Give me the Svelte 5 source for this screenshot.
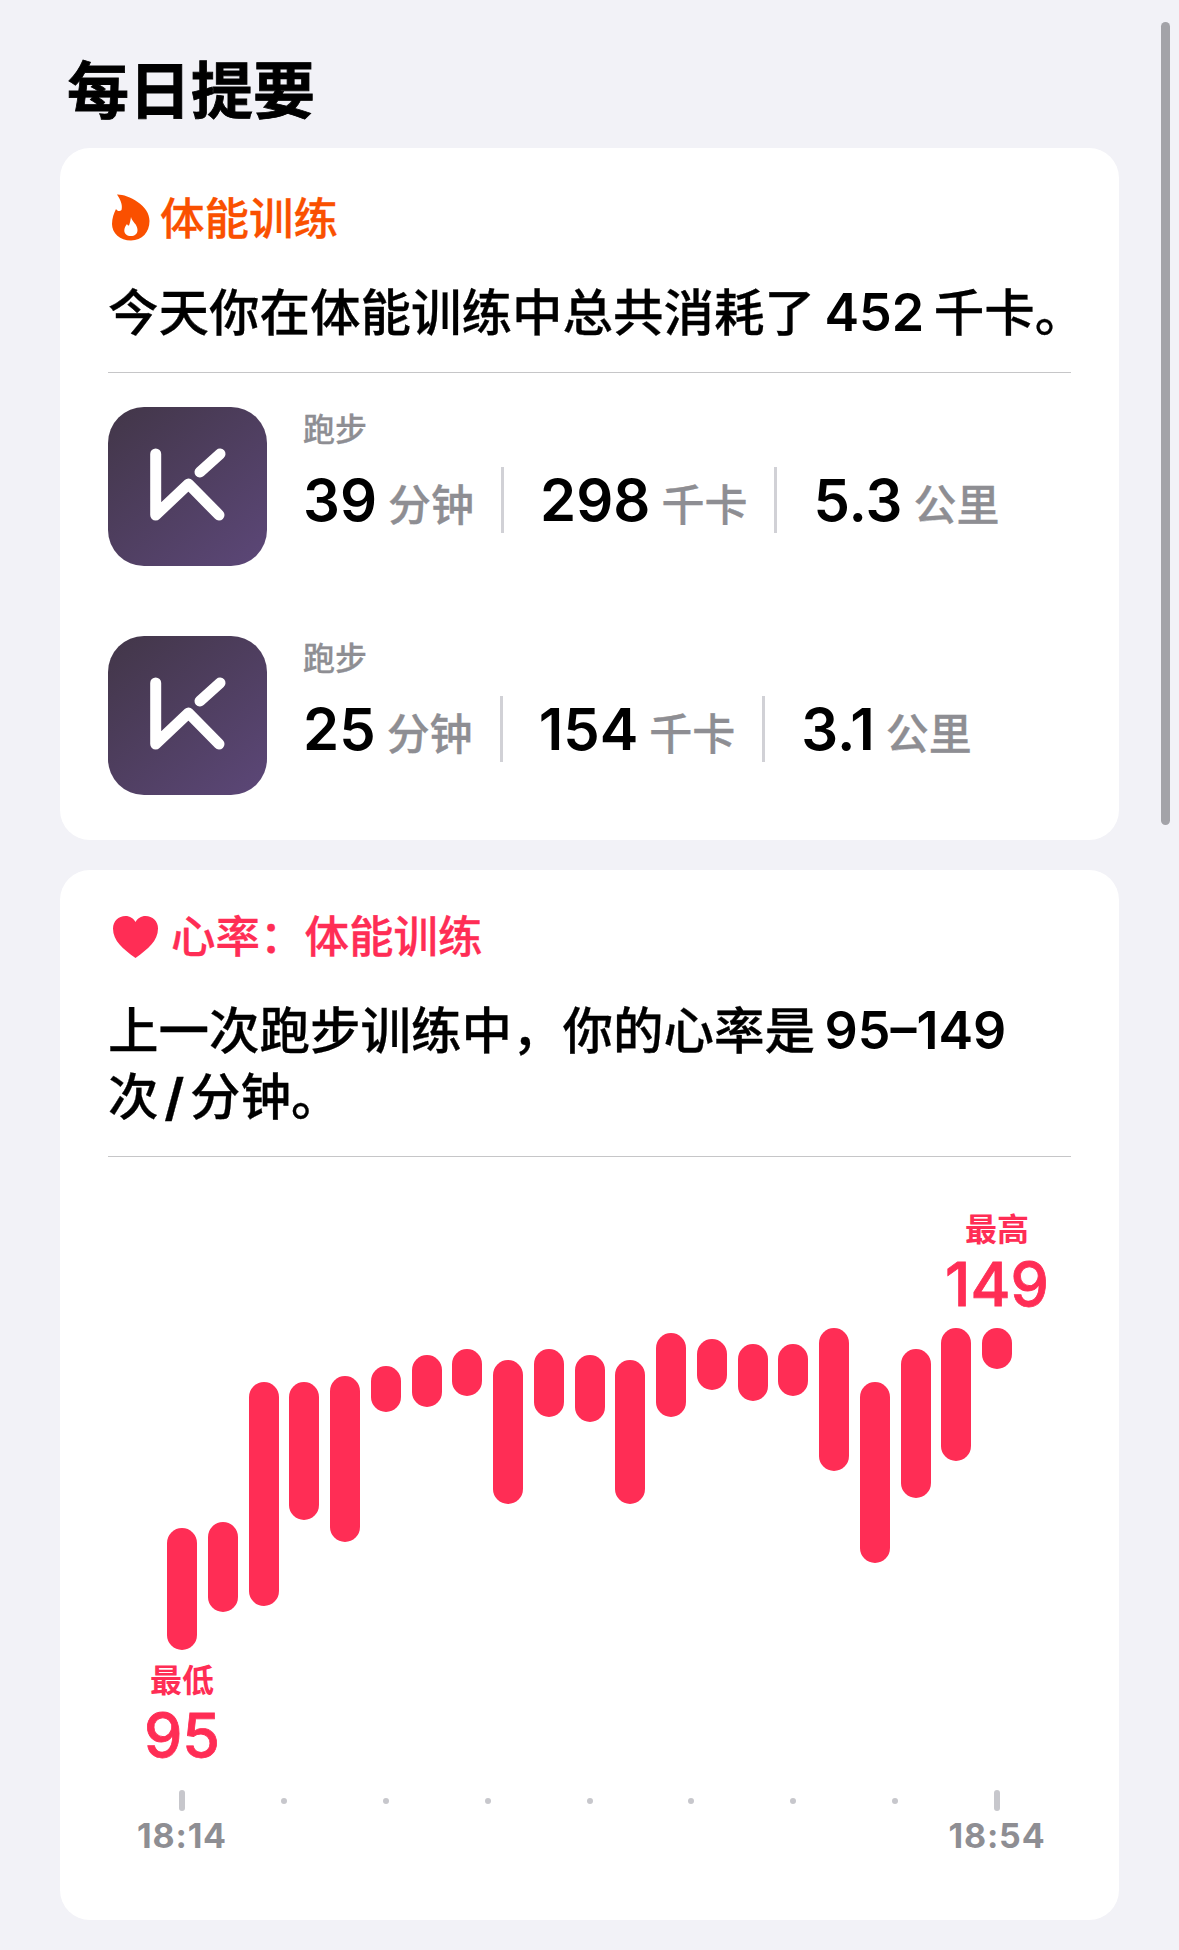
<script>
  const workouts = [
    { stats: [['39', '分钟'], ['298', '千卡'], ['5.3', '公里']] },
    { stats: [['25', '分钟'], ['154', '千卡'], ['3.1', '公里']] }
  ];

  // top and bottom of each bar, in px from the chart top
  const chartTop = 1328;
  const bars = [
    [1527.7, 1649.7], [1522, 1612], [1381.7, 1606.3], [1381.7, 1520], [1376.3, 1541.7],
    [1365.7, 1412], [1354.7, 1406.7], [1349.3, 1396], [1360.3, 1503.7], [1349.3, 1417.3],
    [1354.7, 1422], [1360.3, 1503.7], [1333, 1417.3], [1338.7, 1390.3], [1344, 1401],
    [1344, 1396], [1328, 1471.3], [1381.7, 1563], [1349.3, 1498.3], [1328, 1460.7], [1328, 1368.7]
  ];
  const ticks = [1, 0, 0, 0, 0, 0, 0, 0, 1];
</script>

<div class="page">
  <h1 class="title">每日提要</h1>

  <div class="cards">
    <section class="card">
      <div class="head orange">
        <svg class="flame" viewBox="0 0 38 49" aria-hidden="true">
          <path fill="#fa5000" d="M5 1.500C15 1 38 12 37.500 28C37.500 39 30 47.500 19 47.500C8 47.500 0 40 0 31C0 25 2 20 4 16C5 18 8 19 9.500 17C11 12 8 6 5 1.500Z" />
          <path fill="#fff" d="M19 24C20 29 25.500 31 25.500 37C25.500 41 22.500 43 19 43C15 43 12.300 41 12.300 37.500C12.300 35 13.500 33 15 31C15.500 32 16 32.500 17 32.500C18 30 18.500 27 19 24Z" />
        </svg>
        <span class="head-text">体能训练</span>
      </div>
      <p class="sentence">今天你在体能训练中总共消耗了 <span class="latin">452</span> 千卡。</p>
      <hr />

      <div class="workouts">
        {#each workouts as w}
          <div class="workout">
            <div class="app">
              <svg viewBox="0 0 159 159" aria-hidden="true">
                <path d="M47.700 47V108L80.500 77L111 108" fill="none" stroke="#fff" stroke-width="11" stroke-linecap="round" stroke-linejoin="round" />
                <path d="M112 47L92 65" fill="none" stroke="#fff" stroke-width="11" stroke-linecap="round" />
              </svg>
            </div>
            <div class="info">
              <div class="kind">跑步</div>
              <div class="stats">
                {#each w.stats as [num, unit], i}
                  {#if i > 0}<span class="sep"></span>{/if}
                  <div class="stat">
                    <span class="num">{num}</span>
                    <span class="unit">{unit}</span>
                  </div>
                {/each}
              </div>
            </div>
          </div>
        {/each}
      </div>
    </section>

    <section class="card second">
      <div class="head pink">
        <svg class="heart" viewBox="0 0 45 42" aria-hidden="true">
          <path fill="#ff2d55" d="M22.500 42C10 33 0 25 0 12.500C0 5 5.500 0 12.500 0C17 0 20.500 2.500 22.500 6C24.500 2.500 28 0 32.500 0C39.500 0 45 5 45 12.500C45 25 35 33 22.500 42Z" />
        </svg>
        <span class="head-text">心率：体能训练</span>
      </div>
      <p class="sentence">上一次跑步训练中，你的心率是 <span class="latin">95–149</span><br />次<span class="slash">/</span>分钟。</p>
      <hr />

      <div class="chart">
        <div class="mark high">
          <div class="mark-label">最高</div>
          <div class="mark-value">149</div>
        </div>
        <div class="bars">
          {#each bars as [top, bottom]}
            <div class="bar" style="margin-top: {top - chartTop}px; height: {bottom - top}px"></div>
          {/each}
        </div>
        <div class="mark low">
          <div class="mark-label">最低</div>
          <div class="mark-value">95</div>
        </div>
        <div class="ticks">
          {#each ticks as major}
            <span class="tick-cell"><span class={major ? 'tick' : 'dot'}></span></span>
          {/each}
        </div>
        <div class="times">
          <span>18:14</span>
          <span>18:54</span>
        </div>
      </div>
    </section>
  </div>

  <div class="scrollbar"></div>
</div>

<style>
  :global(body) {
    margin: 0;
    background: #f2f2f7;
  }

  .page {
    position: relative;
    width: 1179px;
    height: 1950px;
    overflow: hidden;
    background: #f2f2f7;
    font-family: Inter, "Noto Sans CJK SC", sans-serif;
    color: #000;
  }

  .title {
    margin: 0 0 25px 67px;
    padding-top: 51px;
    font-size: 62px;
    line-height: 72px;
    font-weight: 700;
    -webkit-text-stroke: 0.8px #000;
    font-family: "Noto Sans CJK SC", sans-serif;
  }

  .cards {
    display: flex;
    flex-direction: column;
    gap: 30px;
    padding: 0 60px;
  }

  .card {
    background: #fff;
    border-radius: 30px;
    padding: 42px 48px 45px;
  }

  .card.second {
    padding-top: 38px;
    padding-bottom: 66px;
  }

  .head {
    display: flex;
    align-items: center;
    height: 55px;
    font-size: 44.500px;
    font-weight: 500;
    font-family: "Noto Sans CJK SC", sans-serif;
  }

  .head-text {
    margin-top: -5px;
    -webkit-text-stroke: 0.3px currentColor;
  }

  .orange { color: #fa5000; }
  .pink { color: #ff2d55; }

  .flame {
    width: 38px;
    height: 49px;
    margin-left: 4px;
    margin-right: 10px;
  }

  .heart {
    width: 45px;
    height: 42px;
    margin-left: 5px;
    margin-right: 13px;
    transform: translateY(1px);
  }

  .sentence {
    margin: 35px 0 26px;
    font-size: 50.500px;
    line-height: 66px;
    font-weight: 500;
    word-spacing: -4px;
    white-space: nowrap;
    -webkit-text-stroke: 0.3px #000;
  }

  .latin {
    font-size: 52px;
    font-weight: 600;
    -webkit-text-stroke: 0;
  }

  .slash {
    margin: 0 6px;
    font-weight: 700;
  }

  hr {
    margin: 0;
    border: 0;
    height: 1px;
    background: #c6c6c8;
  }

  .workouts {
    display: flex;
    flex-direction: column;
    gap: 70px;
    margin-top: 34px;
  }

  .workout {
    display: flex;
    gap: 36px;
  }

  .app {
    width: 159px;
    height: 159px;
    flex: none;
    border-radius: 36px;
    background: linear-gradient(140deg, #423648, #5c4778);
  }

  .app svg {
    display: block;
    width: 159px;
    height: 159px;
  }

  .kind {
    margin-top: 2px;
    font-size: 32px;
    line-height: 36px;
    font-weight: 500;
    color: #8e8e93;
    -webkit-text-stroke: 0.3px #8e8e93;
    font-family: "Noto Sans CJK SC", sans-serif;
  }

  .stats {
    display: flex;
    height: 66px;
    margin-top: 22px;
  }

  .stat {
    display: flex;
    align-items: baseline;
    gap: 11px;
    padding-right: 27px;
  }

  .sep {
    width: 3px;
    background: #d1d1d6;
    margin-right: 36px;
  }

  .num {
    font-size: 58px;
    line-height: 66px;
    font-weight: 600;
  }

  .unit {
    font-size: 43px;
    font-weight: 500;
    color: #8e8e93;
    -webkit-text-stroke: 0.3px #8e8e93;
    font-family: "Noto Sans CJK SC", sans-serif;
  }

  .chart {
    margin: 50px 14px 0;
  }

  .mark {
    width: 120px;
    text-align: center;
    color: #ff2d55;
  }

  .high { margin-left: auto; }

  .low { margin-top: 8px; }

  .mark-label {
    font-size: 32px;
    line-height: 40px;
    font-weight: 700;
    font-family: "Noto Sans CJK SC", sans-serif;
  }

  .mark-value {
    margin-top: 7px;
    font-size: 61px;
    line-height: 60px;
    font-weight: 500;
    -webkit-text-stroke: 0.8px #ff2d55;
  }

  .bars {
    display: flex;
    align-items: flex-start;
    justify-content: space-between;
    height: 322px;
    margin-top: 14px;
    padding: 0 45px;
  }

  .bar {
    width: 30px;
    border-radius: 15px;
    background: #ff2d55;
  }

  .ticks {
    display: flex;
    justify-content: space-between;
    height: 21px;
    margin-top: 25px;
    padding: 0 45px;
  }

  .tick-cell {
    display: flex;
    align-items: center;
    justify-content: center;
    width: 30px;
  }

  .tick {
    width: 6px;
    height: 21px;
    border-radius: 3px;
    background: #c7c7cc;
  }

  .dot {
    width: 6px;
    height: 6px;
    border-radius: 50%;
    background: #c7c7cc;
  }

  .times {
    display: flex;
    justify-content: space-between;
    margin-top: 7px;
    font-size: 34px;
    line-height: 36px;
    font-weight: 700;
    letter-spacing: 0.800px;
    color: #8e8e93;
  }

  .times span {
    width: 120px;
    text-align: center;
  }

  .scrollbar {
    position: absolute;
    left: 1161px;
    top: 22px;
    width: 9px;
    height: 803px;
    border-radius: 4.500px;
    background: #a3a3a8;
  }
</style>
